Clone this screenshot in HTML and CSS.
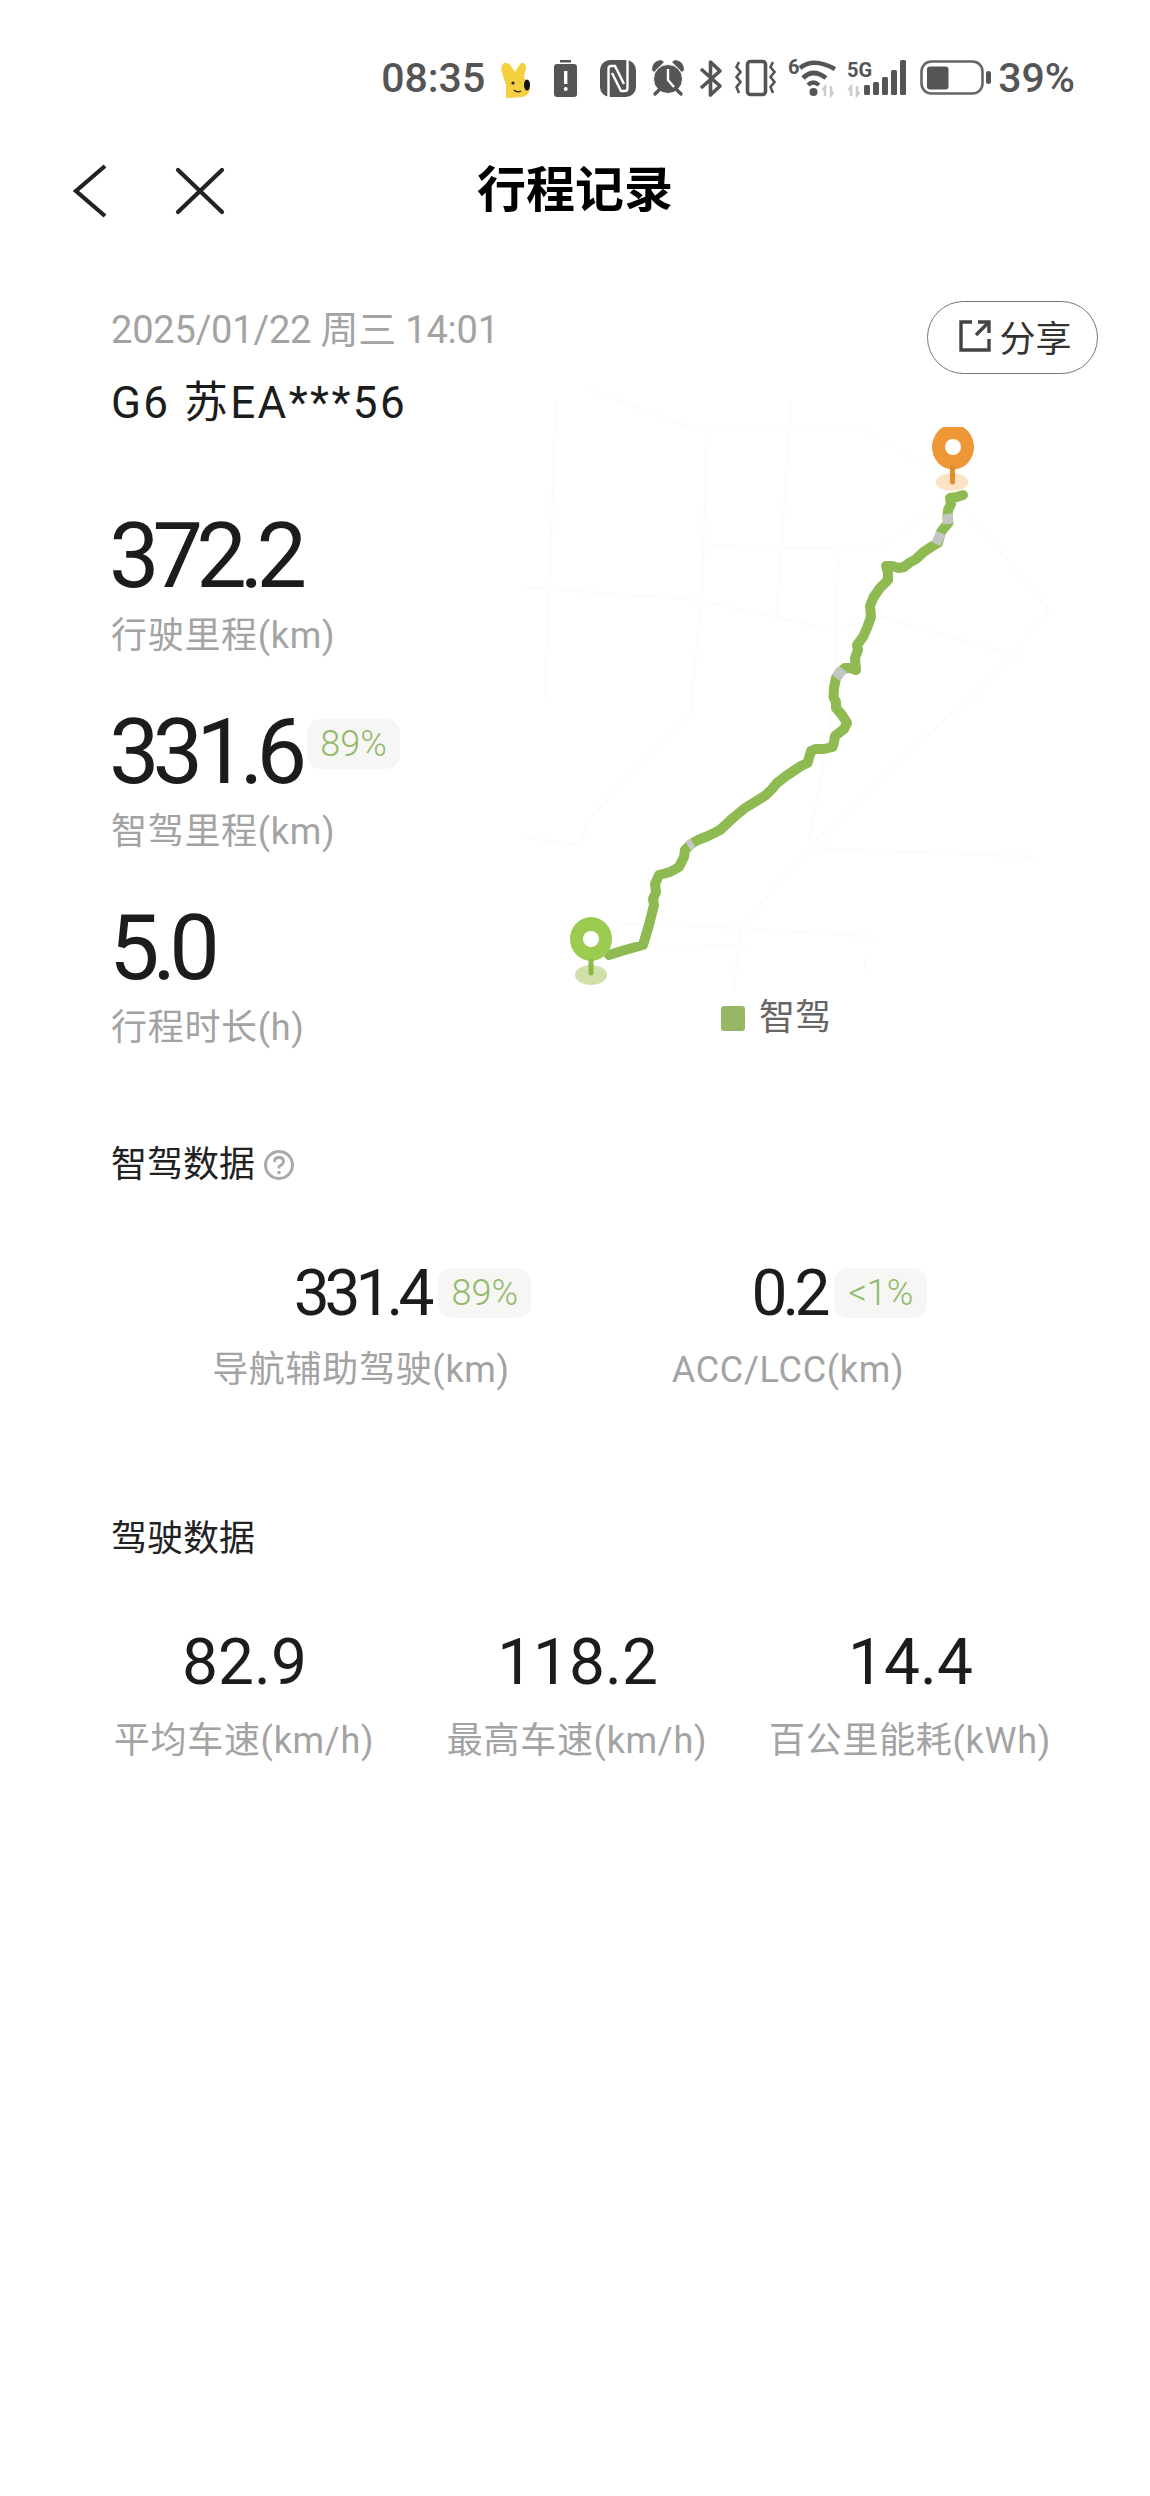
FILE: index.html
```html
<!DOCTYPE html>
<html lang="zh-CN">
<head>
    <meta charset="UTF-8">
    <meta name="viewport" content="width=device-width, initial-scale=1.0">
    <title>行程记录</title>
    <link rel="stylesheet" href="styles.css">
</head>
<body>
    <div class="status-bar">
        <span class="status-time">08:35</span>
        <!-- 通知小图标 -->
        <svg class="status-icon" width="43" height="45" viewBox="0 0 43 45">
            <path fill="#f4d03f" d="M3 8C0 10 0 14 1 18L5 30V43L22 42C27 40 30 36 29 30C27 26 23 24 23 22L25 12C25 8 21 7 19 9L14 17L10 11C8 8 5 7 3 8Z"/>
            <circle cx="12" cy="28" r="1.6" fill="#222"/>
            <ellipse cx="26" cy="30" rx="3" ry="5.5" fill="#111"/>
            <path d="M13 35Q16 38 20 36" fill="none" stroke="#222" stroke-width="1.2"/>
        </svg>
        <svg class="status-icon" width="36" height="45" viewBox="0 0 36 45">
            <rect x="6" y="5" width="11" height="2.5" fill="#555"/>
            <rect x="0" y="9" width="23" height="33" rx="3" fill="#555"/>
            <rect x="10" y="16" width="3.4" height="13" fill="#fff"/>
            <circle cx="11.7" cy="34" r="2" fill="#fff"/>
        </svg>
        <svg class="status-icon" width="41" height="45" viewBox="0 0 41 45">
            <rect x="0" y="5" width="36" height="37" rx="10" fill="#555"/>
            <path d="M8.500 42V14Q8.500 11 11 11H15L24 29" fill="none" stroke="#fff" stroke-width="2.400"/>
            <path d="M27.500 5V33Q27.500 36 25 36H21L12 18" fill="none" stroke="#fff" stroke-width="2.400"/>
        </svg>
        <svg class="status-icon" width="38" height="45" viewBox="0 0 38 45">
            <path d="M1 15Q1 6 10 5L13 7L3 17Z M33 15Q33 6 24 5L21 7L31 17Z" fill="#555"/>
            <circle cx="17" cy="24" r="14.500" fill="#555" stroke="#fff" stroke-width="1"/>
            <path d="M4 39L8 35 M30 39L26 35" stroke="#555" stroke-width="3.4" stroke-linecap="round"/>
            <path d="M17 14V25L23 32" fill="none" stroke="#fff" stroke-width="2.4"/>
        </svg>
        <svg class="status-icon" width="26" height="45" viewBox="0 0 26 45">
            <path d="M2 14L21 31L11.5 40V7L21 16L2 33" fill="none" stroke="#555" stroke-width="3.6" stroke-linejoin="round"/>
        </svg>
        <svg class="status-icon" width="43" height="45" viewBox="0 0 43 45">
            <rect x="12.5" y="6.5" width="18" height="33" rx="3" fill="none" stroke="#555" stroke-width="3.6"/>
            <path d="M4 7L1.5 12L5.5 17L1.5 22L5.5 27L1.5 32L4 38" fill="none" stroke="#555" stroke-width="2.6"/>
            <path d="M38 7L35.500 12L39.500 17L35.500 22L39.500 27L35.500 32L38 38" fill="none" stroke="#555" stroke-width="2.6"/>
        </svg>
        <svg class="status-icon" width="49" height="45" viewBox="0 0 49 45">
            <text class="net-tag" x="0" y="19">6</text>
            <path d="M12 13Q25 2 47 14" fill="none" stroke="#555" stroke-width="4.6"/>
            <path d="M15 23Q25 13 38 23" fill="none" stroke="#555" stroke-width="4.6"/>
            <path d="M20 30Q25 25 31 30" fill="none" stroke="#555" stroke-width="4.2"/>
            <circle cx="25.500" cy="37" r="4" fill="#555"/>
            <path d="M37 41V32L34.500 35 M43 31V40L45.500 37" fill="none" stroke="#ccc" stroke-width="2.6"/>
        </svg>
        <svg class="status-icon" width="63" height="45" viewBox="0 0 63 45">
            <text class="net-tag" x="0" y="22">5G</text>
            <path d="M4 41V32L1.500 35 M10 31V40L12.500 37" fill="none" stroke="#ccc" stroke-width="2.600"/>
            <rect x="17" y="30" width="6" height="10" rx="1.500" fill="#555"/>
            <rect x="26" y="27" width="6" height="13" rx="1.500" fill="#555"/>
            <rect x="35" y="22" width="6" height="18" rx="1.500" fill="#555"/>
            <rect x="44" y="15" width="6" height="25" rx="1.500" fill="#555"/>
            <rect x="53" y="5" width="6" height="35" rx="1.500" fill="#555"/>
        </svg>
        <svg class="status-icon" width="71" height="45" viewBox="0 0 71 45">
            <rect x="1.500" y="6.500" width="61" height="32" rx="10" fill="none" stroke="#666" stroke-width="2.600"/>
            <rect x="7" y="11.500" width="21.500" height="23" rx="3" fill="#555"/>
            <rect x="66" y="16" width="5" height="13" rx="2.500" fill="#555"/>
        </svg>
        <span class="status-battery">39%</span>
    </div>

    <div class="nav-bar">
        <div class="nav-actions">
            <svg width="34" height="54" viewBox="0 0 34 54">
                <path d="M32 2L3 27L32 52" fill="none" stroke="#222" stroke-width="4.200"/>
            </svg>
            <svg width="50" height="48" viewBox="0 0 50 48">
                <path d="M3 3L47 45M47 3L3 45" fill="none" stroke="#222" stroke-width="4.200" stroke-linecap="round"/>
            </svg>
        </div>
        <h1 class="nav-title">行程记录</h1>
    </div>

    <div class="trip">
        <!-- 轨迹图层，坐标直接用页面坐标 -->
        <div class="trip-map">
            <svg class="map-canvas" width="552" height="610" viewBox="500 380 552 610">
                <defs>
                    <clipPath id="pinClip"><rect x="900" y="427" width="120" height="70"/></clipPath>
                </defs>
                <g class="map-roads">
                    <path d="M556 400L545 700"/>
                    <path d="M707 433L702 597L691 700L691 713L588 820L581 845L520 837"/>
                    <path d="M791 400L777 617"/>
                    <path d="M584 387L688 427L856 427L931 467"/>
                    <path d="M520 587L698 600L834 630L881 617L1020 657"/>
                    <path d="M706 545L877 550L941 503"/>
                    <path d="M966 510L1049 610L1013 653L974 700"/>
                    <path d="M838 553L834 700L827 747L809 840"/>
                    <path d="M984 683L813 843L741 927L734 990"/>
                    <path d="M813 848L1038 857"/>
                    <path d="M613 923L741 928L877 937"/>
                    <path d="M656 947L749 945"/>
                    <path d="M865 957L865 973"/>
                </g>
                <path class="route" d="M963 495L957 497L950 498L951 504L948 510L947.500 517L948.500 523L944 528L941 532L938 543L931 547L923.500 552L916 559L909 563L904 567L898.600 568L892 566L886 566L888 573L888 580L880 588L873.600 597L870 606L871 617L867 628L863 637L857 645L858 650L855 658L856 670L850 668L845 668L840 672L836 678L834 688L833.500 697L836 702L836 708L842 715L847 723L844 729L835 736L834 742L832.500 747L824 749L816 749L811 751L809 758L807.500 763L801 766L795 770L786 776L777 783L771 790L766 795L755 802L745 808L733 818L720 830L708 836L698 840L691 844L685 850L684 857L679 867L670 872L659 875L655 884L656 892L653 899L654 905L649 925L643 945L625 950L609 955"/>
                <path class="route-gap" d="M947 514L948 524"/>
                <path class="route-gap" d="M941 533L936 544"/>
                <path class="route-gap" d="M843 669L836 678"/>
                <path class="route-gap" d="M693 843L688 846"/>

                <ellipse cx="952" cy="482" rx="16" ry="9" fill="#fbe3c4"/>
                <g clip-path="url(#pinClip)">
                    <ellipse cx="953" cy="447" rx="21" ry="22.500" fill="#ef9636"/>
                </g>
                <circle cx="953" cy="447" r="8" fill="#fff"/>
                <path d="M952.500 467V482" stroke="#e08f2e" stroke-width="5" stroke-linecap="round"/>

                <ellipse cx="591" cy="975" rx="16" ry="10" fill="#cfe0a8"/>
                <ellipse cx="591" cy="939" rx="21" ry="22" fill="#9ccb52"/>
                <circle cx="591" cy="939" r="8" fill="#fff"/>
                <path d="M591 961V973" stroke="#8cb84a" stroke-width="5" stroke-linecap="round"/>
            </svg>
            <div class="map-legend">
                <span class="legend-dot"></span>
                <span>智驾</span>
            </div>
        </div>

        <button class="share-btn">
            <svg width="32" height="32" viewBox="0 0 32 32">
                <path d="M13 2H2V30H30V19" fill="none" stroke="#444" stroke-width="3.400"/>
                <path d="M17 15L30 2M19 2H30V13" fill="none" stroke="#444" stroke-width="3.400"/>
            </svg>
            分享
        </button>

        <div class="trip-date">2025/01/22 周三 14:01</div>
        <div class="trip-car">G6 苏EA***56</div>

        <div class="stat-list">
            <div class="stat">
                <div class="stat-value">372.2</div>
                <div class="stat-label">行驶里程(km)</div>
            </div>
            <div class="stat">
                <div class="stat-value">331.6<span class="chip chip-inline">89%</span></div>
                <div class="stat-label">智驾里程(km)</div>
            </div>
            <div class="stat">
                <div class="stat-value">5.0</div>
                <div class="stat-label">行程时长(h)</div>
            </div>
        </div>

        <h2 class="section-title section-assist">智驾数据
            <svg width="32" height="32" viewBox="0 0 32 32">
                <circle cx="16" cy="16" r="13.500" fill="none" stroke="#aaa" stroke-width="3"/>
                <path d="M11.500 13Q11.500 8.500 16 8.500Q20.500 8.500 20.500 12.500Q20.500 15 16 17.500V19.500" fill="none" stroke="#aaa" stroke-width="2.800"/>
                <circle cx="16" cy="23.500" r="1.800" fill="#aaa"/>
            </svg>
        </h2>
        <div class="assist-grid">
            <div class="metric">
                <div class="metric-value"><span class="metric-num">331.4<span class="chip chip-float">89%</span></span></div>
                <div class="stat-label">导航辅助驾驶(km)</div>
            </div>
            <div class="metric">
                <div class="metric-value"><span class="metric-num">0.2<span class="chip chip-float">&lt;1%</span></span></div>
                <div class="stat-label">ACC/LCC(km)</div>
            </div>
        </div>

        <h2 class="section-title section-drive">驾驶数据</h2>
        <div class="drive-grid">
            <div class="metric">
                <div class="drive-value">82.9</div>
                <div class="stat-label">平均车速(km/h)</div>
            </div>
            <div class="metric">
                <div class="drive-value">118.2</div>
                <div class="stat-label">最高车速(km/h)</div>
            </div>
            <div class="metric">
                <div class="drive-value">14.4</div>
                <div class="stat-label">百公里能耗(kWh)</div>
            </div>
        </div>
    </div>
</body>
</html>
```

FILE: styles.css
```css
:root {
    --text-color: #1c1c1c;
    --muted-color: #a3a3a3;
    --status-color: #555;
    --green: #93b96a;
    --chip-bg: #f6f7f5;
}

* {
    box-sizing: border-box;
    margin: 0;
    padding: 0;
}

body {
    font-family: Roboto, 'Noto Sans CJK SC', sans-serif;
    background-color: #fff;
    color: var(--text-color);
    width: 1150px;
    min-height: 2496px;
    padding-top: 56px;
}

/* 状态栏 */
.status-bar {
    display: flex;
    justify-content: flex-end;
    align-items: center;
    gap: 10px;
    height: 45px;
    padding-right: 75px;
    color: var(--status-color);
}

.status-time {
    font-size: 41px;
    font-weight: 500;
    margin-right: 6px;
    line-height: 45px;
}

.status-icon {
    flex: none;
    display: block;
    margin-top: -2px;
}

.status-battery {
    font-size: 41px;
    font-weight: 500;
    margin-left: -3px;
    line-height: 45px;
}

.net-tag {
    font-family: Roboto, sans-serif;
    font-size: 20px;
    font-weight: 700;
    fill: #555;
}

/* 顶部导航 */
.nav-bar {
    position: relative;
    display: flex;
    align-items: center;
    height: 80px;
    margin-top: 49px;
    padding-left: 73px;
}

.nav-actions {
    display: flex;
    align-items: center;
    gap: 68px;
    margin-top: 2px;
}

.nav-title {
    position: absolute;
    top: 0;
    left: 0;
    right: 0;
    text-align: center;
    font-size: 49px;
    font-weight: 700;
    line-height: 82px;
    color: #000;
}

/* 行程内容 */
.trip {
    position: relative;
    padding: 78px 112px 0;
}

.trip-map {
    position: absolute;
    top: 150px;
    left: 500px;
    width: 552px;
}

.map-canvas {
    display: block;
}

.map-roads path {
    fill: none;
    stroke: #fbfcfb;
    stroke-width: 2.5;
}

.route {
    fill: none;
    stroke: #8fba52;
    stroke-width: 10;
    stroke-linejoin: round;
    stroke-linecap: round;
}

.route-gap {
    fill: none;
    stroke: #c4c6c2;
    stroke-width: 10;
}

.map-legend {
    display: flex;
    justify-content: center;
    align-items: center;
    gap: 14px;
    margin-top: 6px;
    font-size: 36px;
    line-height: 44px;
    color: #666;
}

.legend-dot {
    width: 24px;
    height: 25px;
    border-radius: 3px;
    background: #96b764;
}

.share-btn {
    position: absolute;
    top: 71px;
    right: 52px;
    display: flex;
    align-items: center;
    justify-content: center;
    gap: 8px;
    width: 171px;
    height: 73px;
    padding-left: 6px;
    padding-bottom: 3px;
    border: 1.5px solid #777;
    border-radius: 37px;
    background: #fff;
    font-family: inherit;
    font-size: 36px;
    color: #333;
}

.trip-date {
    margin-left: -1px;
    font-size: 38px;
    line-height: 44px;
    letter-spacing: -0.2px;
    color: var(--muted-color);
}

.trip-car {
    margin-top: 26px;
    margin-left: -1px;
    font-size: 44px;
    line-height: 50px;
    letter-spacing: 2.4px;
}

.stat-list {
    display: flex;
    flex-direction: column;
    gap: 50px;
    margin-top: 84px;
}

.stat-value {
    display: flex;
    align-items: flex-start;
    height: 90px;
    font-size: 90px;
    line-height: 90px;
    letter-spacing: -7px;
    margin-left: -3px;
}

.stat-label {
    margin-top: 12px;
    margin-left: -1px;
    font-size: 36px;
    line-height: 44px;
    letter-spacing: 0.7px;
    color: var(--muted-color);
    white-space: nowrap;
}

.chip {
    display: inline-block;
    width: 93px;
    height: 50px;
    border-radius: 14px;
    background: var(--chip-bg);
    color: var(--green);
    font-size: 36px;
    font-weight: 300;
    line-height: 50px;
    letter-spacing: 0;
    text-align: center;
}

.chip-inline {
    margin-top: 11px;
    margin-left: 7px;
}

.chip-float {
    position: absolute;
    top: 9px;
    left: calc(100% + 9px);
}

.section-title {
    display: flex;
    align-items: center;
    gap: 8px;
    margin-left: -1px;
    font-size: 36px;
    font-weight: 400;
    line-height: 44px;
    color: #222;
}

.section-assist {
    margin-top: 93px;
}

.section-drive {
    margin-top: 125px;
}

.assist-grid {
    display: grid;
    grid-template-columns: 1fr 1fr;
    margin: 72px 36px 0;
}

.drive-grid {
    display: grid;
    grid-template-columns: repeat(3, 333px);
    margin: 67px -34px 0;
}

.metric {
    text-align: center;
}

.metric-value {
    height: 70px;
    font-size: 64px;
    line-height: 70px;
    letter-spacing: -5px;
}

.metric-value + .stat-label {
    margin-top: 19px;
}

.metric-num {
    position: relative;
    display: inline-block;
}

.drive-value {
    height: 70px;
    font-size: 64px;
    line-height: 70px;
}

.drive-value + .stat-label {
    margin-top: 21px;
}
```
